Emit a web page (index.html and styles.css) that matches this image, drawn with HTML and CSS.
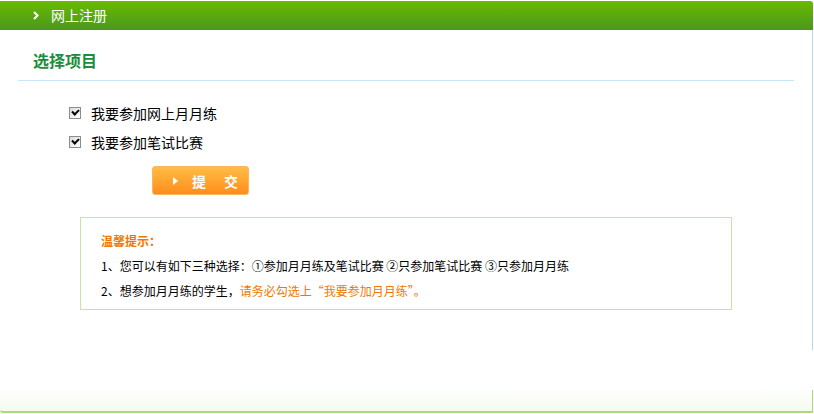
FILE: index.html
```html
<!DOCTYPE html>
<html lang="zh-CN">
<head>
  <meta charset="UTF-8">
  <title>网上注册</title>
  <link rel="stylesheet" href="styles.css">
</head>
<body>

  <div class="page">
    <div class="header">
      <svg class="arrow" width="6" height="9" viewBox="0 0 6 9"><path d="M1 1 L4.5 4.5 L1 8" fill="none" stroke="#fff" stroke-width="2"/></svg>
      <span>网上注册</span>
    </div>

    <div class="main">
      <h2 class="title">选择项目</h2>

      <form class="choose">
        <label class="item"><input type="checkbox" checked> 我要参加网上月月练</label>
        <label class="item"><input type="checkbox" checked> 我要参加笔试比赛</label>
        <button type="submit" class="submit-btn">
          <svg width="5" height="8" viewBox="0 0 5 8"><path d="M0 0 L5 4 L0 8 Z" fill="#fff"/></svg>
          <span>提</span><span>交</span>
        </button>
      </form>

      <div class="notice">
        <div class="notice-title">温馨提示：</div>
        <div>1、您可以有如下三种选择：①参加月月练及笔试比赛 ②只参加笔试比赛 ③只参加月月练</div>
        <div>2、想参加月月练的学生，<span class="orange">请务必勾选上“我要参加月月练”。</span></div>
      </div>
    </div>

    <div class="foot"></div>
  </div>

</body>
</html>
```

FILE: styles.css
```css
body {
  margin: 0;
  font-family: "Noto Sans CJK SC", "Liberation Sans", sans-serif;
  background-color: #fff;
  color: #000;
}

.page {
  width: 813px;
}

.header {
  margin-top: 1px;
  height: 29px;
  padding-left: 33px;
  display: flex;
  align-items: center;
  gap: 12px;
  color: #fff;
  font-size: 14px;
  background: linear-gradient(to bottom, #6aba00, #4a981e);
  border-top-right-radius: 3px;
}

.header span {
  line-height: 29px;
}

.main {
  height: 320px;
  border-right: 1px solid #b7d5f5;
}

.title {
  margin: 0 18px 0 18px;
  padding: 18px 0 8px 15px;
  font-size: 16px;
  line-height: 24px;
  font-weight: bold;
  color: #1c8d3c;
  border-bottom: 1px solid #c8e6fa;
}

.choose {
  padding: 17px 0 0 69px;
  display: flex;
  flex-direction: column;
  align-items: flex-start;
}

.item {
  height: 29px;
  display: flex;
  align-items: center;
  gap: 10px;
  font-size: 14px;
}

.item input {
  appearance: none;
  margin: 0;
  width: 12px;
  height: 12px;
  border: 1px solid #8c8c8c;
  background: linear-gradient(135deg, #dcdcd6, #fff);
  display: grid;
  place-content: center;
}

.item input:checked::before {
  content: "";
  width: 5px;
  height: 3px;
  border-left: 2px solid #000;
  border-bottom: 2px solid #000;
  transform: translateY(-1px) rotate(-45deg);
}

.submit-btn {
  margin: 10px 0 0 83px;
  width: 97px;
  height: 29px;
  display: flex;
  align-items: center;
  padding: 0 0 0 20px;
  gap: 14px;
  color: #fff;
  font-family: inherit;
  font-size: 14px;
  font-weight: bold;
  background: linear-gradient(to bottom, #ffbd45, #ff8d1c);
  border: 1px solid #fbb460;
  border-radius: 3px;
  cursor: pointer;
}

.submit-btn span + span {
  margin-left: 4px;
}

.notice {
  margin: 22px 0 0 80px;
  width: 610px;
  padding: 10px 20px 6px 20px;
  border: 1px solid #c6e6a0;
  font-size: 12px;
  line-height: 25px;
}

.notice-title {
  font-weight: bold;
  color: #f07800;
}

.orange {
  color: #f07800;
}

.foot {
  height: 61px;
  border-bottom: 2px solid #a8dc78;
  border-bottom-left-radius: 3px;
  background:
    linear-gradient(#a8dc78, #a8dc78) right bottom / 1px 21px no-repeat,
    linear-gradient(to bottom, #fff 38px, #f5fbee 61px);
}
```
